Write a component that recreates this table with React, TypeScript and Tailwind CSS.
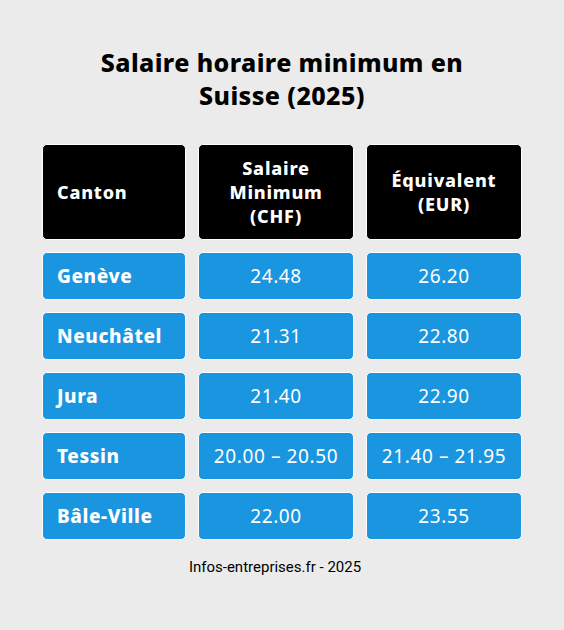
import React from "react";

const rows = [
  ["Genève", "24.48", "26.20"],
  ["Neuchâtel", "21.31", "22.80"],
  ["Jura", "21.40", "22.90"],
  ["Tessin", "20.00 – 20.50", "21.40 – 21.95"],
  ["Bâle-Ville", "22.00", "23.55"],
];

const font = "font-['Noto_Sans','Open_Sans',sans-serif]";

export default function App() {
  return (
    <div className={`w-[564px] h-[630px] bg-[#ebebeb] flex flex-col items-center pt-[46px] ${font}`}>
      <h1 className="text-[25px] leading-[33px] font-extrabold text-black text-center tracking-[0.4px]">
        Salaire horaire minimum en
        <br />
        Suisse (2025)
      </h1>

      <div className="mt-[32px] grid grid-cols-[144px_156px_156px] gap-x-[12px] gap-y-[12px]">
        <div className="h-[96px] bg-black border border-white rounded-[5px] flex items-center px-[14px] text-white font-extrabold text-[18px] leading-[24px] tracking-[0.8px]">
          Canton
        </div>
        <div className="h-[96px] bg-black border border-white rounded-[5px] flex items-center justify-center text-center text-white font-extrabold text-[18px] leading-[24px] tracking-[0.8px]">
          Salaire
          <br />
          Minimum
          <br />
          (CHF)
        </div>
        <div className="h-[96px] bg-black border border-white rounded-[5px] flex items-center justify-center text-center text-white font-extrabold text-[18px] leading-[24px] tracking-[0.8px]">
          Équivalent
          <br />
          (EUR)
        </div>

        {rows.map((r) => (
          <React.Fragment key={r[0]}>
            <div className="h-[48px] bg-[#1a96e0] border border-white rounded-[5px] flex items-center px-[14px] text-white font-extrabold text-[19px] tracking-[0.6px]">
              {r[0]}
            </div>
            <div className="h-[48px] bg-[#1a96e0] border border-white rounded-[5px] flex items-center justify-center text-white text-[19px] tracking-[0.6px]">
              {r[1]}
            </div>
            <div className="h-[48px] bg-[#1a96e0] border border-white rounded-[5px] flex items-center justify-center text-white text-[19px] tracking-[0.6px]">
              {r[2]}
            </div>
          </React.Fragment>
        ))}
      </div>

      <p className="mt-[16px] pr-[14px] text-[15px] text-black font-['Roboto',sans-serif]">
        Infos-entreprises.fr - 2025
      </p>
    </div>
  );
}
